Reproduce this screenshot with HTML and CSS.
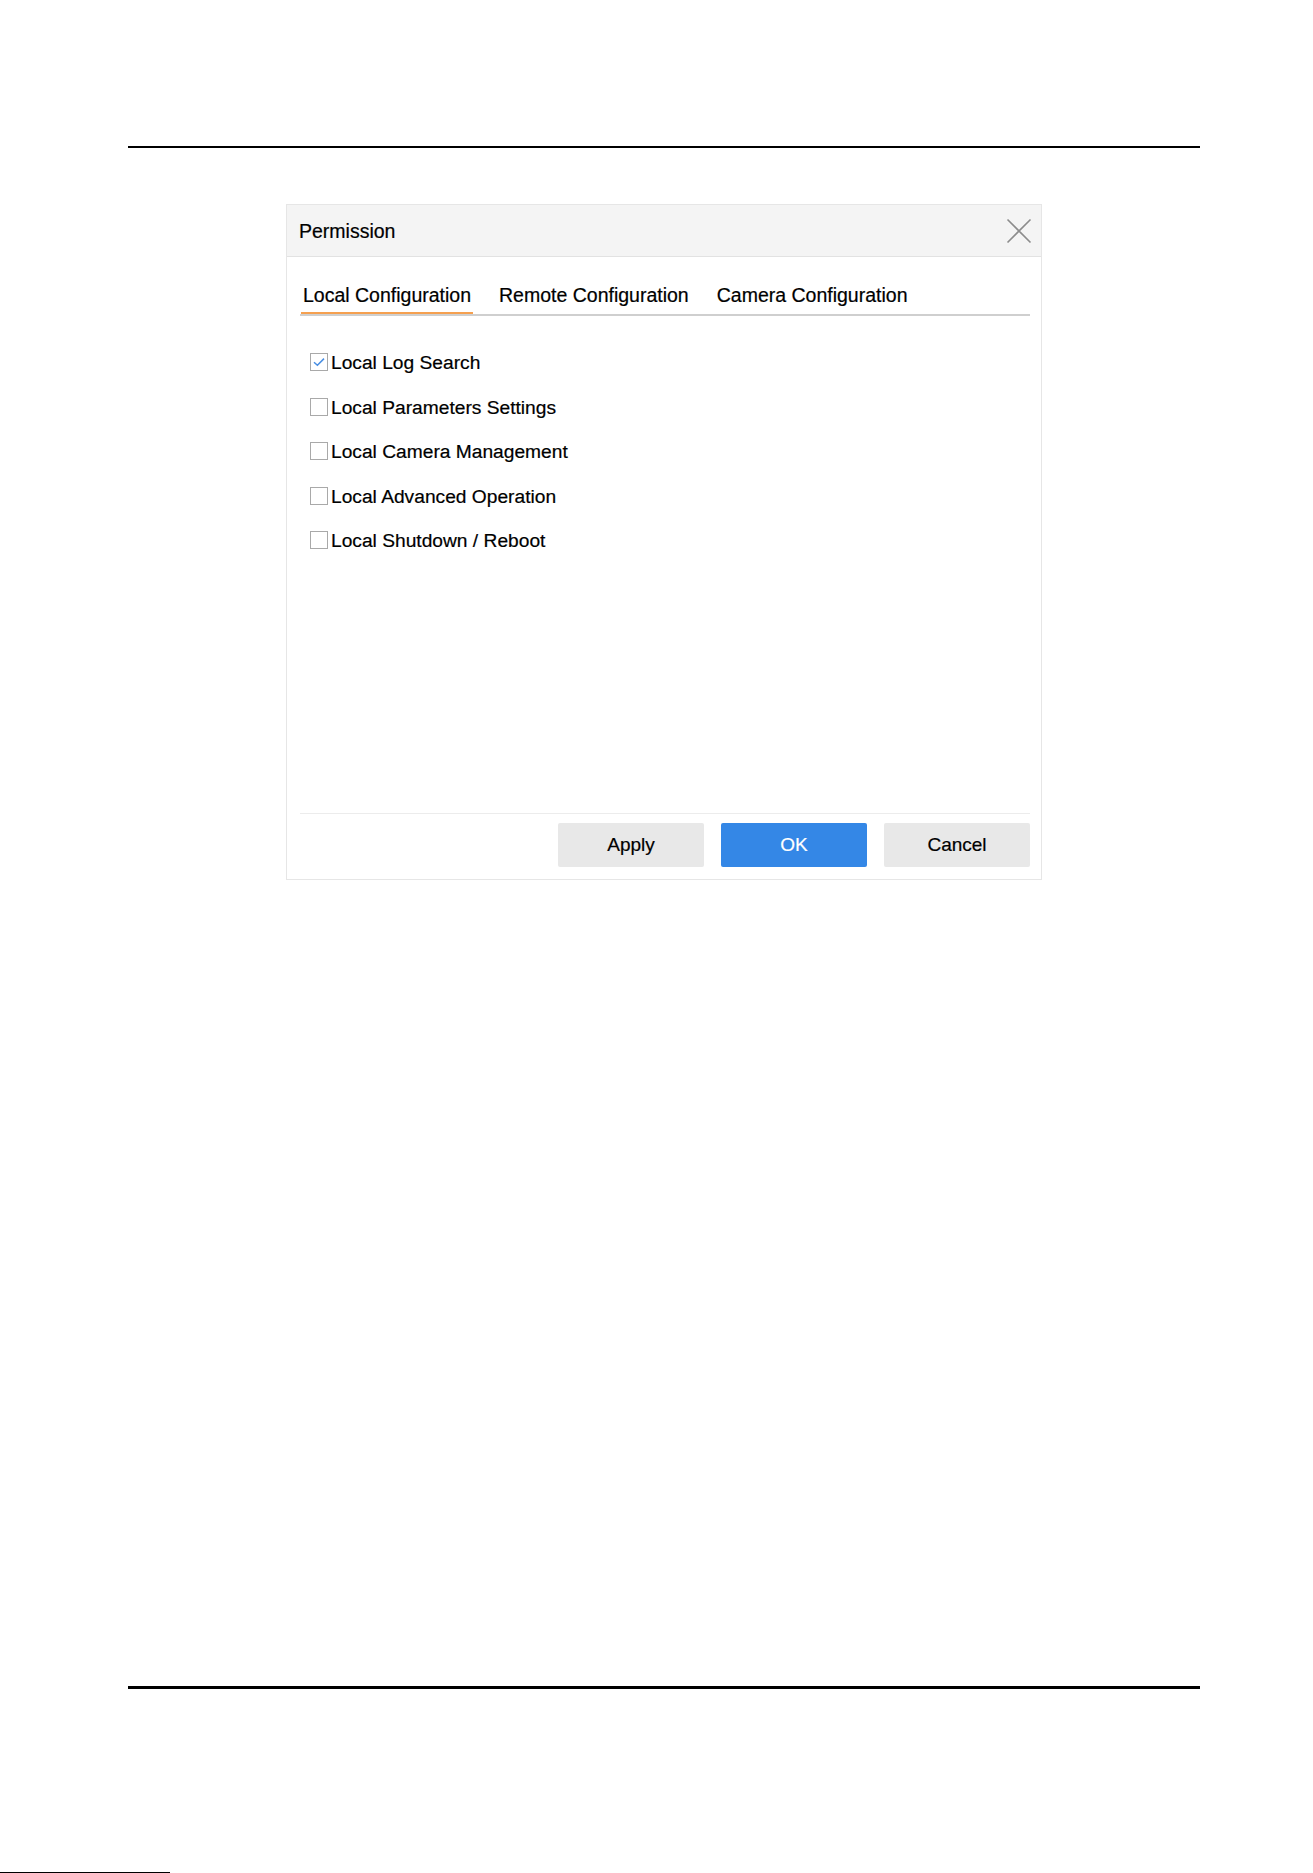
FILE: index.html
```html
<!DOCTYPE html>
<html lang="en">
<head>
<meta charset="utf-8">
<title>Permission</title>
<link rel="stylesheet" href="styles.css">
</head>
<body>
<div class="page">
  <div class="rule rule-top"></div>
  <div class="dialog">
    <div class="dialog-header">
      <span class="dialog-title">Permission</span>
      <span class="close">
        <svg width="26" height="26" viewBox="0 0 26 26"><path d="M1.5 1.5 L24.5 24.5 M24.5 1.5 L1.5 24.5" stroke="#8c8c8c" stroke-width="1.6" fill="none"/></svg>
      </span>
    </div>
    <div class="dialog-body">
      <div class="tabs">
        <div class="tab tab-active">Local Configuration</div>
        <div class="tab tab-2">Remote Configuration</div>
        <div class="tab tab-3">Camera Configuration</div>
      </div>
      <div class="options">
        <label class="option"><span class="box checked"><svg width="16" height="16" viewBox="0 0 16 16"><path d="M3 8.2 L6.4 11.3 L13 4.6" stroke="#4a8fe3" stroke-width="1.5" fill="none"/></svg></span><span class="label">Local Log Search</span></label>
        <label class="option"><span class="box"></span><span class="label">Local Parameters Settings</span></label>
        <label class="option"><span class="box"></span><span class="label">Local Camera Management</span></label>
        <label class="option"><span class="box"></span><span class="label">Local Advanced Operation</span></label>
        <label class="option"><span class="box"></span><span class="label">Local Shutdown / Reboot</span></label>
      </div>
    </div>
    <div class="dialog-footer">
      <button class="btn">Apply</button>
      <button class="btn btn-primary">OK</button>
      <button class="btn">Cancel</button>
    </div>
  </div>
  <div class="rule rule-bottom"></div>
  <div class="scan-line"></div>
</div>
</body>
</html>
```
FILE: styles.css
```css
html, body {
  margin: 0;
  padding: 0;
  background: #ffffff;
}
body {
  font-family: "Liberation Sans", Arial, sans-serif;
  color: #000;
  overflow: hidden;
}
.page {
  width: 1313px;
  height: 1873px;
  display: flex;
  flex-direction: column;
}
.page > * {
  flex-shrink: 0;
}
.rule {
  background: #000;
  margin-left: 128px;
  width: 1072px;
}
.rule-top {
  margin-top: 146px;
  height: 2px;
}
.dialog {
  margin-top: 56px;
  margin-left: 286px;
  width: 756px;
  box-sizing: border-box;
  border: 1px solid #e6e6e6;
  background: #fff;
  display: flex;
  flex-direction: column;
}
.dialog-header {
  height: 51px;
  background: #f4f4f4;
  border-bottom: 1px solid #e2e2e2;
  display: flex;
  align-items: center;
  justify-content: space-between;
  padding: 0 9px 0 12px;
}
.dialog-title {
  font-size: 19.5px;
  color: #000;
  padding-top: 1px;
  -webkit-text-stroke: 0.2px #000;
}
.close {
  width: 26px;
  height: 26px;
  display: flex;
}
.dialog-body {
  height: 556px;
  padding: 26px 11px 0 13px;
  box-sizing: border-box;
  display: flex;
  flex-direction: column;
}
.tabs {
  display: flex;
  border-bottom: 2px solid #cfcfcf;
}
.tab {
  font-size: 19.5px;
  line-height: 24px;
  padding: 0 2px 5px;
  border-bottom: 2px solid transparent;
  color: #000;
  -webkit-text-stroke: 0.2px #000;
}
.tab-active {
  margin-left: 1px;
  border-bottom-color: #f5a050;
}
.tab-2 {
  margin-left: 24px;
}
.tab-3 {
  margin-left: 24px;
}
.options {
  padding-top: 24px;
  display: flex;
  flex-direction: column;
}
.option {
  height: 44.5px;
  display: flex;
  align-items: center;
  padding-left: 10px;
}
.box {
  width: 18px;
  height: 18px;
  box-sizing: border-box;
  border: 1.5px solid #a9a9a9;
  background: #fff;
  display: flex;
  align-items: center;
  justify-content: center;
  margin-right: 3px;
}
.label {
  font-size: 19.2px;
  line-height: 22px;
  padding-top: 2px;
  color: #000;
  -webkit-text-stroke: 0.2px #000;
}
.dialog-footer {
  margin: 0 11px 0 13px;
  border-top: 1px solid #ececec;
  padding: 9px 0 12px;
  display: flex;
  justify-content: flex-end;
  gap: 17px;
}
.btn {
  width: 146px;
  height: 44px;
  border: none;
  border-radius: 2px;
  background: #e8e8e8;
  font-family: "Liberation Sans", Arial, sans-serif;
  font-size: 19px;
  color: #000;
  padding: 0;
  -webkit-text-stroke: 0.2px #000;
}
.btn-primary {
  background: #3487e6;
  color: #fff;
  -webkit-text-stroke: 0.2px #fff;
}
.rule-bottom {
  margin-top: 806px;
  height: 3px;
}
.scan-line {
  margin-top: 183px;
  width: 170px;
  height: 1px;
  background: #000;
}
```
